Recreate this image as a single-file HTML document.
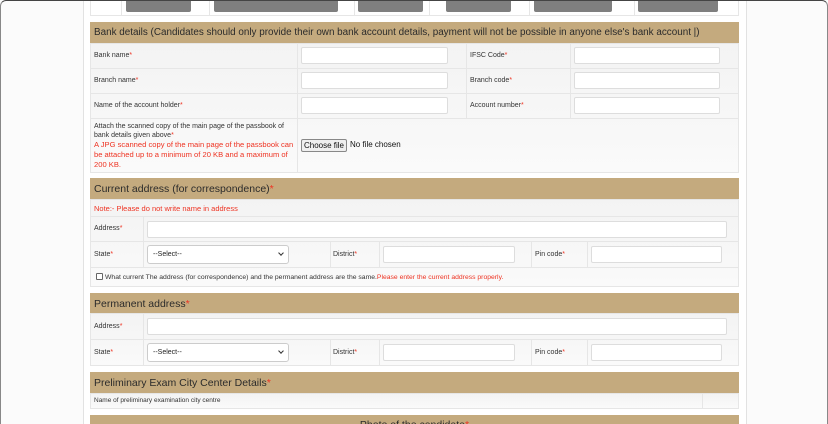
<!DOCTYPE html>
<html style="width:828px;height:424px;overflow:hidden"><head><meta charset="utf-8"><style>
*{margin:0;padding:0;box-sizing:border-box}
body{width:828px;height:424px;overflow:hidden;background:#fbfbfb;font-family:"Liberation Sans",sans-serif;position:relative;color:#333}
.frame{position:absolute;left:0;top:0;width:828px;height:424px;border-top:1px solid #444;border-left:1px solid #888;border-right:1px solid #888;border-radius:6px 6px 0 0;pointer-events:none}
.wrap{position:absolute;left:83px;top:0;width:664px;height:424px;background:#fff;border-left:1px solid #e2e2e2;border-right:1px solid #e2e2e2}
.a{position:absolute}
.hd{position:absolute;left:90px;width:649px;background:#c4aa7e;color:#2b2b2b;font-size:10.5px;padding-left:4px;display:flex;align-items:center;overflow:hidden;white-space:nowrap}
.row{position:absolute;background:linear-gradient(#f3f3f3,#fafafa);border:1px solid #e6e6e6}
.lb{position:absolute;font-size:7px;color:#333}
.r{color:#e32}
.in{position:absolute;background:#fff;border:1px solid #ddd;border-radius:2px}
.sel{position:absolute;background:#fff;border:1px solid #ccc;border-radius:3px;font-size:7px;padding-left:5px;display:flex;align-items:center;color:#222}
.sel:after{content:"";position:absolute;right:5px;top:5px;width:3px;height:3px;border-right:1px solid #333;border-bottom:1px solid #333;transform:rotate(45deg)}
.btn{position:absolute;top:0;height:12px;background:#7f7f7f;border-radius:0 0 2px 2px}
.vl{position:absolute;width:1px;background:#e6e6e6}
</style></head><body>
<div class="wrap"></div>
<div class="row" style="left:90px;top:-2px;width:649px;height:18px;background:#fff"></div>
<div class="vl" style="left:121px;top:0;height:16px"></div>
<div class="vl" style="left:209px;top:0;height:16px"></div>
<div class="vl" style="left:354px;top:0;height:16px"></div>
<div class="vl" style="left:429px;top:0;height:16px"></div>
<div class="vl" style="left:529px;top:0;height:16px"></div>
<div class="vl" style="left:634px;top:0;height:16px"></div>
<div class="btn" style="left:126px;width:65px"></div>
<div class="btn" style="left:214px;width:124px"></div>
<div class="btn" style="left:358px;width:65px"></div>
<div class="btn" style="left:446px;width:65px"></div>
<div class="btn" style="left:534px;width:78px"></div>
<div class="btn" style="left:638px;width:80px"></div>

<div class="hd" style="top:22px;height:21px;font-size:9.9px">Bank details (Candidates should only provide their own bank account details, payment will not be possible in anyone else's bank account |)</div>
<div class="row" style="left:90px;top:43px;width:649px;height:130px"></div>
<div class="a" style="left:90px;top:68px;width:649px;height:1px;background:#e6e6e6"></div>
<div class="a" style="left:90px;top:93px;width:649px;height:1px;background:#e6e6e6"></div>
<div class="a" style="left:90px;top:118px;width:649px;height:1px;background:#e6e6e6"></div>
<div class="vl" style="left:297px;top:43px;height:130px"></div>
<div class="vl" style="left:466px;top:43px;height:75px"></div>
<div class="vl" style="left:570px;top:43px;height:75px"></div>
<div class="lb" style="left:94px;top:52px">Bank name<span class="r">*</span></div>
<div class="lb" style="left:94px;top:77px">Branch name<span class="r">*</span></div>
<div class="lb" style="left:94px;top:102px">Name of the account holder<span class="r">*</span></div>
<div class="lb" style="left:470px;top:52px">IFSC Code<span class="r">*</span></div>
<div class="lb" style="left:470px;top:77px">Branch code<span class="r">*</span></div>
<div class="lb" style="left:470px;top:102px">Account number<span class="r">*</span></div>
<div class="in" style="left:301px;top:47px;width:147px;height:17px"></div>
<div class="in" style="left:301px;top:72px;width:147px;height:17px"></div>
<div class="in" style="left:301px;top:97px;width:147px;height:17px"></div>
<div class="in" style="left:574px;top:47px;width:146px;height:17px"></div>
<div class="in" style="left:574px;top:72px;width:146px;height:17px"></div>
<div class="in" style="left:574px;top:97px;width:146px;height:17px"></div>
<div class="lb" style="left:94px;top:122px;width:202px;line-height:9px">Attach the scanned copy of the main page of the passbook of bank details given above<span class="r">*</span><br><span class="r" style="font-size:7.6px;line-height:10px;display:block">A JPG scanned copy of the main page of the passbook can be attached up to a minimum of 20 KB and a maximum of 200 KB.</span></div>
<div class="a" style="left:301px;top:139px;width:46px;height:13px;border:1px solid #888;border-radius:2px;background:#efefef;font-size:8px;text-align:center;line-height:11px;color:#111">Choose file</div>
<div class="a" style="left:350px;top:140px;font-size:8px;color:#111">No file chosen</div>

<div class="hd" style="top:178px;height:21px">Current address (for correspondence)<span class="r">*</span></div>
<div class="row" style="left:90px;top:199px;width:649px;height:88px"></div>
<div class="lb" style="left:94px;top:204px;font-size:7.5px"><span class="r">Note:- Please do not write name in address</span></div>
<div class="a" style="left:90px;top:216px;width:649px;height:1px;background:#e6e6e6"></div>
<div class="a" style="left:90px;top:241px;width:649px;height:1px;background:#e6e6e6"></div>
<div class="a" style="left:90px;top:267px;width:649px;height:1px;background:#e6e6e6"></div>
<div class="vl" style="left:143px;top:216px;height:51px"></div>
<div class="vl" style="left:330px;top:241px;height:26px"></div>
<div class="vl" style="left:379px;top:241px;height:26px"></div>
<div class="vl" style="left:531px;top:241px;height:26px"></div>
<div class="vl" style="left:587px;top:241px;height:26px"></div>
<div class="lb" style="left:94px;top:225px">Address<span class="r">*</span></div>
<div class="in" style="left:147px;top:221px;width:580px;height:17px"></div>
<div class="lb" style="left:94px;top:251px">State<span class="r">*</span></div>
<div class="sel" style="left:147px;top:245px;width:142px;height:19px">--Select--</div>
<div class="lb" style="left:333px;top:251px">District<span class="r">*</span></div>
<div class="in" style="left:383px;top:246px;width:132px;height:17px"></div>
<div class="lb" style="left:535px;top:251px">Pin code<span class="r">*</span></div>
<div class="in" style="left:591px;top:246px;width:131px;height:17px"></div>
<div class="a" style="left:96px;top:273px;width:7px;height:7px;border:1px solid #666;border-radius:1px;background:#fff"></div>
<div class="lb" style="left:105px;top:274px;font-size:6.8px">What current The address (for correspondence) and the permanent address are the same.<span class="r">Please enter the current address properly.</span></div>

<div class="hd" style="top:293px;height:21px">Permanent address<span class="r">*</span></div>
<div class="row" style="left:90px;top:313px;width:649px;height:53px"></div>
<div class="a" style="left:90px;top:339px;width:649px;height:1px;background:#e6e6e6"></div>
<div class="vl" style="left:143px;top:313px;height:52px"></div>
<div class="vl" style="left:330px;top:339px;height:26px"></div>
<div class="vl" style="left:379px;top:339px;height:26px"></div>
<div class="vl" style="left:531px;top:339px;height:26px"></div>
<div class="vl" style="left:587px;top:339px;height:26px"></div>
<div class="lb" style="left:94px;top:323px">Address<span class="r">*</span></div>
<div class="in" style="left:147px;top:318px;width:580px;height:17px"></div>
<div class="lb" style="left:94px;top:349px">State<span class="r">*</span></div>
<div class="sel" style="left:147px;top:343px;width:142px;height:19px">--Select--</div>
<div class="lb" style="left:333px;top:349px">District<span class="r">*</span></div>
<div class="in" style="left:383px;top:344px;width:132px;height:17px"></div>
<div class="lb" style="left:535px;top:349px">Pin code<span class="r">*</span></div>
<div class="in" style="left:591px;top:344px;width:131px;height:17px"></div>

<div class="hd" style="top:372px;height:21px">Preliminary Exam City Center Details<span class="r">*</span></div>
<div class="row" style="left:90px;top:393px;width:649px;height:16px"></div>
<div class="vl" style="left:702px;top:393px;height:16px"></div>
<div class="lb" style="left:94px;top:397px;font-size:6.5px">Name of preliminary examination city centre</div>

<div class="a" style="left:90px;top:415px;width:649px;height:9px;background:#c4aa7e;overflow:hidden"><div style="position:absolute;left:0;width:649px;top:4px;text-align:center;font-size:10.5px;color:#2b2b2b;white-space:nowrap">Photo of the candidate<span class="r">*</span></div></div>
<div class="frame"></div>
</body></html>
